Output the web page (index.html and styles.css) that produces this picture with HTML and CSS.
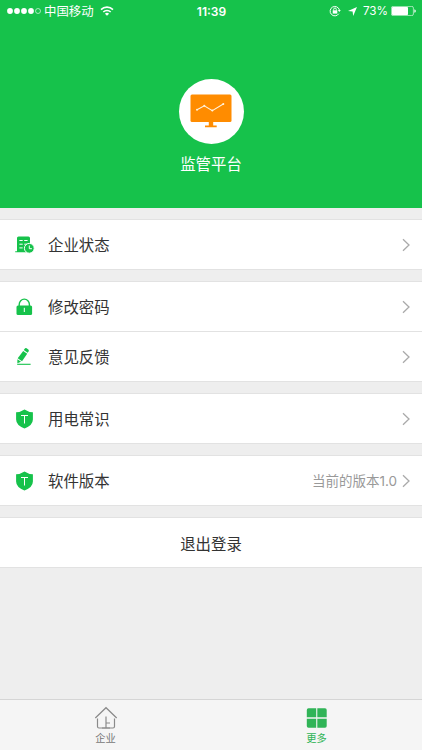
FILE: index.html
```
<!DOCTYPE html>
<html lang="zh-CN">
<head>
    <meta charset="UTF-8">
    <meta name="viewport" content="width=device-width, initial-scale=1.0">
    <title>更多</title>
    <link rel="stylesheet" href="styles.css">
</head>
<body>
    <header class="header">
        <div class="status-bar">
            <div class="status-left">
                <svg class="signal" width="34" height="8" viewBox="0 0 34 8" fill="#fff">
                    <circle cx="3" cy="4" r="2.9"/>
                    <circle cx="10" cy="4" r="2.9"/>
                    <circle cx="17" cy="4" r="2.9"/>
                    <circle cx="24" cy="4" r="2.9"/>
                    <circle cx="31" cy="4" r="2.5" fill="none" stroke="#fff" stroke-width="0.6"/>
                </svg>
                <span class="carrier">中国移动</span>
                <svg class="wifi" width="14" height="10" viewBox="0 0 14 10" fill="none" stroke="#fff" stroke-width="1.6">
                    <path d="M1 3.6a8.6 8.6 0 0 1 12 0"/>
                    <path d="M3.3 6a5.3 5.3 0 0 1 7.4 0"/>
                    <path d="M7 9.8L4.9 7.7a3 3 0 0 1 4.2 0z" fill="#fff" stroke="none"/>
                </svg>
            </div>
            <span class="time">11:39</span>
            <div class="status-right">
                <svg width="12" height="12" viewBox="0 0 12 12" fill="none" stroke="#fff">
                    <path d="M9.8 8.7A4.7 4.7 0 1 1 10.4 5"/>
                    <path d="M8.8 5h3l-1.5 2z" fill="#fff" stroke="none"/>
                    <path d="M3.7 5.3h4.6v3.3H3.7z" fill="#fff" stroke="none"/>
                    <path d="M4.7 5.5V4.3a1.3 1.3 0 0 1 2.6 0v1.2" stroke-width="0.9"/>
                </svg>
                <svg class="location" width="9" height="9" viewBox="0 0 9 9" fill="#fff">
                    <path d="M9 0L5.2 9 4.6 4.5 0 4z"/>
                </svg>
                <span class="percent">73%</span>
                <svg class="battery" width="25" height="10" viewBox="0 0 25 10">
                    <rect x="0.4" y="0.4" width="22" height="9.2" rx="1.6" fill="none" stroke="#fff" stroke-width="0.6"/>
                    <rect x="1" y="1" width="16" height="8" rx="0.8" fill="#fff"/>
                    <path d="M23.4 3.2q1.4.4 1.4 1.8t-1.4 1.8z" fill="#fff"/>
                </svg>
            </div>
        </div>
        <div class="profile">
            <div class="avatar">
                <svg width="42" height="34" viewBox="0 0 42 34">
                    <rect x="0.5" y="0.5" width="41" height="27.5" rx="1.5" fill="#ff8c00"/>
                    <path d="M18.8 28h4.4v3.4h3.5v1.8H15v-1.8h3.8z" fill="#ff8c00"/>
                    <path d="M7 15.8l7.3-4 8 4.8L33.3 10" fill="none" stroke="#fff3df" stroke-width="1.1"/>
                    <g fill="#fff3df">
                        <circle cx="7" cy="15.8" r="1"/>
                        <circle cx="14.3" cy="11.8" r="1"/>
                        <circle cx="22.3" cy="16.6" r="1"/>
                        <circle cx="33.3" cy="10" r="1"/>
                    </g>
                </svg>
            </div>
            <h1 class="name">监管平台</h1>
        </div>
    </header>

    <main class="menu">
        <div class="group">
            <div class="row">
                <svg class="icon" width="20" height="20" viewBox="0 0 20 20">
                    <path d="M2 3Q2 1.4 3.6 1.4h9.8Q15 1.400 15 3v14.300H0.200v-1.100H2z" fill="#16c24b"/>
                    <path d="M4.400 5.500h3.300M9.200 5.500h3.400M4.400 9.200h3.300M9.200 9.200h3.400M4.400 12.900h3.300" stroke="#fff" stroke-width="1"/>
                    <circle cx="14.300" cy="13.300" r="4.900" fill="#16c24b" stroke="#fff" stroke-width="1"/>
                    <path d="M14.300 10.500v3.200h2.600" fill="none" stroke="#fff" stroke-width="1"/>
                </svg>
                <span class="label">企业状态</span>
                <svg class="arrow" width="8" height="14" viewBox="0 0 8 14"><path d="M1 1.2L7 7l-6 5.8"/></svg>
            </div>
        </div>

        <div class="group">
            <div class="row">
                <svg class="icon" width="20" height="20" viewBox="0 0 20 20">
                    <path d="M4.2 9V7.400a5.100 5.300 0 0 1 10.200 0V9" fill="none" stroke="#16c24b" stroke-width="1.400"/>
                    <rect x="1.500" y="8.400" width="15.600" height="9.600" rx="1.500" fill="#16c24b"/>
                    <path d="M9.300 10.800v4.200" stroke="#fff" stroke-width="1"/>
                </svg>
                <span class="label">修改密码</span>
                <svg class="arrow" width="8" height="14" viewBox="0 0 8 14"><path d="M1 1.2L7 7l-6 5.8"/></svg>
            </div>
            <div class="row">
                <svg class="icon" width="20" height="20" viewBox="0 0 20 20">
                    <path d="M8.800 3l.9-1.300q.8-1.100 1.900-.4l1.700 1.200q1 .8.300 1.800l-1 1.400z" fill="#16c24b"/>
                    <path d="M8.200 3.900l4 2.800-5.200 7.600-4.300-3z" fill="#16c24b"/>
                    <path d="M2.400 12.300l3.600 2.500-3.600 1.500z" fill="#16c24b"/>
                    <path d="M2.200 17.300h13.400" stroke="#16c24b" stroke-width="1.1"/>
                </svg>
                <span class="label">意见反馈</span>
                <svg class="arrow" width="8" height="14" viewBox="0 0 8 14"><path d="M1 1.2L7 7l-6 5.8"/></svg>
            </div>
        </div>

        <div class="group">
            <div class="row">
                <svg class="icon" width="20" height="20" viewBox="0 0 20 20">
                    <path d="M9.500 .5q4 2.700 8.400 2.700v7.400q0 5.700-8.400 9-8.400-3.300-8.400-9V3.200q4.400 0 8.400-2.700z" fill="#16c24b"/>
                    <path d="M6 6.500h7M9.500 6.500v8" fill="none" stroke="#fff" stroke-width="1"/>
                </svg>
                <span class="label">用电常识</span>
                <svg class="arrow" width="8" height="14" viewBox="0 0 8 14"><path d="M1 1.2L7 7l-6 5.8"/></svg>
            </div>
        </div>

        <div class="group">
            <div class="row">
                <svg class="icon" width="20" height="20" viewBox="0 0 20 20">
                    <path d="M9.500 .5q4 2.700 8.400 2.700v7.400q0 5.700-8.400 9-8.400-3.300-8.400-9V3.200q4.400 0 8.400-2.700z" fill="#16c24b"/>
                    <path d="M6 6.500h7M9.500 6.500v8" fill="none" stroke="#fff" stroke-width="1"/>
                </svg>
                <span class="label">软件版本</span>
                <span class="version">当前的版本1.0</span>
                <svg class="arrow" width="8" height="14" viewBox="0 0 8 14"><path d="M1 1.2L7 7l-6 5.8"/></svg>
            </div>
        </div>

        <button class="logout" type="button">退出登录</button>
    </main>

    <nav class="tab-bar">
        <a class="tab">
            <svg width="24" height="24" viewBox="0 0 24 24" fill="none" stroke="#8a8a8a" stroke-width="1.2">
                <path d="M1.300 12L12 1.700 22.700 12"/>
                <path d="M3.500 12.500v8q0 1.500 1.500 1.500h14q1.500 0 1.500-1.500v-8"/>
                <path d="M12 10.500V22M12 17h4M8 22h8"/>
            </svg>
            <span>企业</span>
        </a>
        <a class="tab active">
            <svg width="24" height="24" viewBox="0 0 24 24" fill="#30b457">
                <path d="M3.500 2.300h7.700v9H1.800V4q0-1.700 1.700-1.700z"/>
                <path d="M12.300 2.300H20q1.700 0 1.700 1.700v7.300h-9.400z"/>
                <path d="M1.800 12.800h9.400v9H3.500q-1.700 0-1.700-1.700z"/>
                <path d="M12.300 12.800h9.400v7.300q0 1.700-1.700 1.700h-7.700z"/>
            </svg>
            <span>更多</span>
        </a>
    </nav>
</body>
</html>
```
FILE: styles.css
```
/* Reset */
* {
    margin: 0;
    padding: 0;
    box-sizing: border-box;
}

body {
    font-family: "Liberation Sans", "Noto Sans CJK SC", sans-serif;
    background-color: #eee;
    color: #333;
    display: flex;
    flex-direction: column;
    height: 100vh;
    overflow: hidden;
}

svg {
    display: block;
    flex-shrink: 0;
}

/* Header */
.header {
    height: 208px;
    background-color: #16c24b;
    color: #fff;
}

.status-bar {
    display: grid;
    grid-template-columns: 1fr auto 1fr;
    align-items: center;
    height: 22px;
    padding: 0 6px 0 7px;
    font-family: Inter, "Noto Sans CJK SC", sans-serif;
    font-size: 12px;
    line-height: 22px;
}

.status-left,
.status-right {
    display: flex;
    align-items: center;
}

.status-right {
    justify-content: flex-end;
}

.carrier {
    margin-left: 3px;
    padding-top: 1px;
    font-size: 12.4px;
    line-height: 21px;
}

.wifi {
    margin-left: 6px;
}

.time {
    padding-top: 1px;
    font-weight: 600;
    line-height: 21px;
}

.location {
    margin-left: 7px;
}

.percent {
    margin-left: 6px;
    padding-top: 1px;
    font-size: 11.7px;
    line-height: 21px;
}

.battery {
    margin-left: 3px;
}

.profile {
    display: flex;
    flex-direction: column;
    align-items: center;
    padding-top: 57px;
}

.avatar {
    display: flex;
    justify-content: center;
    align-items: center;
    width: 65px;
    height: 65px;
    padding-bottom: 1px;
    border-radius: 50%;
    background-color: #fff;
}

.name {
    margin-top: 9px;
    font-size: 15.4px;
    font-weight: normal;
    line-height: 24px;
}

/* Menu */
.menu {
    flex: 1;
    display: flex;
    flex-direction: column;
    gap: 11px;
    padding-top: 11px;
}

.group {
    background-color: #fff;
    border-top: 1px solid #e2e2e2;
    border-bottom: 1px solid #e2e2e2;
}

.row {
    display: flex;
    align-items: center;
    height: 49px;
    padding: 0 12px 0 15px;
}

.row + .row {
    height: 50px;
    border-top: 1px solid #e2e2e2;
}

.label {
    flex: 1;
    margin-left: 13px;
    padding-bottom: 1px;
    font-size: 15.4px;
}

.version {
    margin-right: 5px;
    padding-bottom: 1px;
    font-family: Inter, "Noto Sans CJK SC", sans-serif;
    font-size: 13.5px;
    color: #999;
}

.arrow {
    fill: none;
    stroke: #aaa;
    stroke-width: 1.3;
}

.logout {
    height: 51px;
    border: 1px solid #e2e2e2;
    border-width: 1px 0;
    background-color: #fff;
    color: #333;
    font-family: inherit;
    font-size: 15.4px;
}

/* Tab bar */
.tab-bar {
    display: flex;
    height: 51px;
    border-top: 1px solid #d5d5d5;
    background-color: #f5f5f5;
}

.tab {
    flex: 1;
    display: flex;
    flex-direction: column;
    align-items: center;
    padding-top: 6px;
    color: #777;
    font-size: 10.3px;
    line-height: 18px;
}

.tab.active {
    color: #30b457;
}
```
